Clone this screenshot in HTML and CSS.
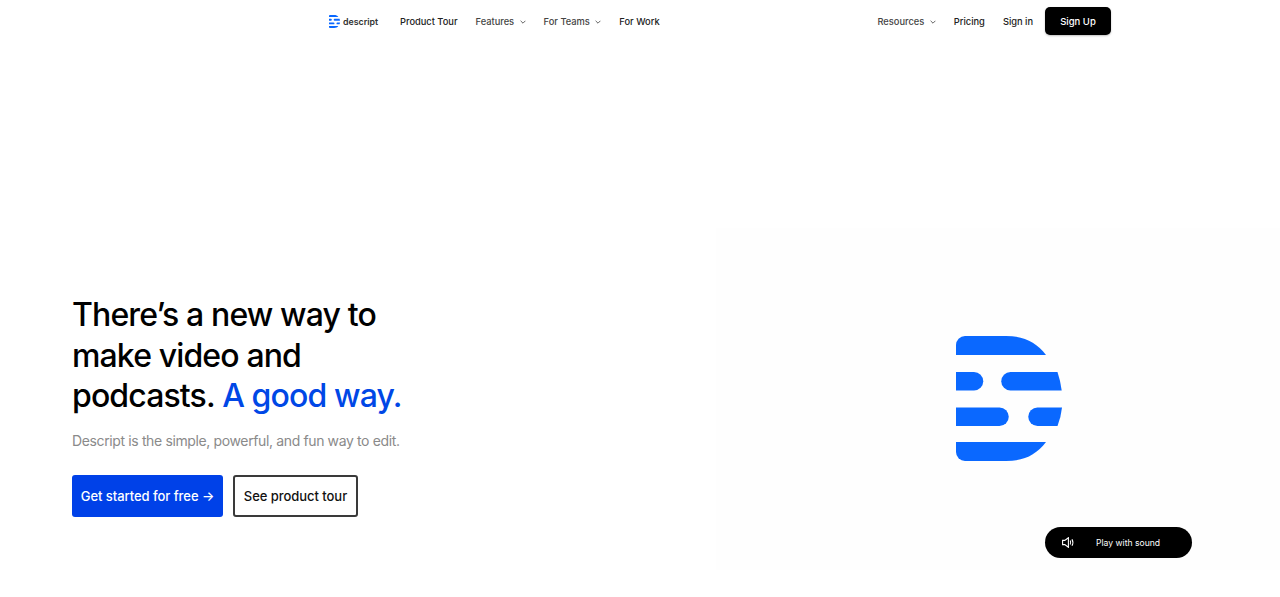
FILE: index.html
```html
<!DOCTYPE html>
<html lang="en">

<head>
    <meta charset="UTF-8">
    <title>Descript</title>
    <link rel="stylesheet" href="styles.css">
</head>

<body>
    <svg class="defs" width="0" height="0">
        <symbol id="mark" viewBox="0 0 106 125">
            <path d="M0 19V9a9 9 0 0 1 9-9H50C68 0 80 6 90 19Z" />
            <path d="M0 36H18a9.25 9.25 0 0 1 0 18.5H0Z" />
            <path d="M54.5 36H101.5Q104.5 45 105.7 54.5H54.5a9.25 9.25 0 0 1 0-18.5Z" />
            <path d="M0 71.5H43.5a9.25 9.25 0 0 1 0 18.5H0Z" />
            <path d="M81.5 71.5H106Q105 81 101.5 90H81.5a9.25 9.25 0 0 1 0-18.5Z" />
            <path d="M0 106V116a9 9 0 0 0 9 9H50C68 125 80 119 90 106Z" />
        </symbol>
    </svg>

    <header class="nav">
        <a class="logo" href="#">
            <svg class="logo-mark" width="11" height="13"><use href="#mark" /></svg>
            <span>descript</span>
        </a>
        <nav class="links">
            <a class="link strong" href="#">Product Tour</a>
            <a class="link" href="#">Features <svg class="chev" width="6" height="4" viewBox="0 0 6 4"><path d="M.6.8 3 3.2 5.4.8" /></svg></a>
            <a class="link" href="#">For Teams <svg class="chev" width="6" height="4" viewBox="0 0 6 4"><path d="M.6.8 3 3.2 5.4.8" /></svg></a>
            <a class="link strong" href="#">For Work</a>
        </nav>
        <nav class="links right">
            <a class="link" href="#">Resources <svg class="chev" width="6" height="4" viewBox="0 0 6 4"><path d="M.6.8 3 3.2 5.4.8" /></svg></a>
            <a class="link strong" href="#">Pricing</a>
            <a class="link strong" href="#">Sign in</a>
            <a class="signup" href="#">Sign Up</a>
        </nav>
    </header>

    <main class="hero">
        <section class="copy">
            <h1>There’s a new way to make video and podcasts. <span class="blue">A good way.</span></h1>
            <p class="lead">Descript is the simple, powerful, and fun way to edit.</p>
            <div class="actions">
                <a class="btn primary" href="#">Get started for free →</a>
                <a class="btn outline" href="#">See product tour</a>
            </div>
        </section>
        <section class="video">
            <svg class="video-mark" width="106" height="125"><use href="#mark" /></svg>
            <button class="sound">
                <svg width="13" height="11" viewBox="0 0 13 11">
                    <path class="speaker" d="M.6 3.4H2.8L6.4.7V10.3L2.8 7.6H.6Z" />
                    <path class="speaker" d="M8.2 3.6Q9.2 5.5 8.2 7.4M10 2.2Q11.8 5.5 10 8.8" />
                </svg>
                <span>Play with sound</span>
            </button>
        </section>
    </main>
</body>

</html>
```

FILE: styles.css
```css
* {
    box-sizing: border-box;
}

body {
    margin: 0;
    background: #fff;
    color: #000;
    font-family: Inter, "Liberation Sans", sans-serif;
    overflow: hidden;
}

a {
    color: inherit;
    text-decoration: none;
}

.defs {
    position: absolute;
}

/* nav */
.nav {
    display: flex;
    align-items: center;
    height: 42px;
    padding: 0 169px 0 329px;
}

.logo {
    display: flex;
    align-items: center;
    gap: 3px;
    width: 71px;
    font-size: 8.8px;
    font-weight: 600;
    color: #333;
}

.logo-mark {
    fill: #0a68ff;
}

.links {
    display: flex;
    align-items: center;
    gap: 18px;
}

.right {
    margin-left: auto;
}

.link {
    font-size: 9.3px;
    font-weight: 500;
    color: #444;
}

.strong {
    color: #222;
}

.chev {
    margin-left: 3px;
    vertical-align: 1px;
    fill: none;
    stroke: #555;
    stroke-width: 0.9;
}

.signup {
    display: flex;
    align-items: center;
    justify-content: center;
    width: 66px;
    height: 28px;
    margin-left: -6px;
    background: #000;
    border-radius: 5px;
    color: #fff;
    font-size: 9.5px;
    font-weight: 500;
    box-shadow: 0 1px 2px rgba(0, 0, 0, 0.25);
}

/* hero */
.hero {
    display: grid;
    grid-template-columns: 716px 564px;
    margin-top: 186px;
}

.copy {
    padding: 67px 0 0 72px;
}

h1 {
    width: 340px;
    margin: 0;
    font-size: 32px;
    font-weight: 500;
    line-height: 40.5px;
    letter-spacing: -0.87px;
}

.blue {
    color: #0047e6;
}

.lead {
    margin: 14px 0 0;
    font-size: 14px;
    line-height: 20px;
    letter-spacing: -0.37px;
    color: #8a8a8a;
}

.actions {
    display: flex;
    gap: 10px;
    margin-top: 24px;
}

.btn {
    display: flex;
    align-items: center;
    justify-content: center;
    height: 42px;
    border-radius: 3px;
    font-size: 13px;
    font-weight: 500;
    letter-spacing: -0.05px;
}

.primary {
    width: 151px;
    background: #0041e8;
    color: #fff;
}

.outline {
    width: 125px;
    border: 2px solid #3a3a3a;
    color: #111;
}

.video {
    position: relative;
    display: flex;
    align-items: center;
    justify-content: center;
    height: 342px;
    padding: 0 0 1px 22px;
    background: #fefefe;
}

.video-mark {
    fill: #0a68ff;
}

.sound {
    position: absolute;
    left: 329px;
    top: 299px;
    display: flex;
    align-items: center;
    width: 147px;
    height: 31px;
    padding: 0 0 0 17px;
    border: 0;
    border-radius: 16px;
    background: #000;
    color: #fff;
    font-family: inherit;
    font-size: 8.6px;
}

.sound span {
    margin-left: 21px;
}

.speaker {
    fill: none;
    stroke: #fff;
    stroke-width: 1.1;
}
```
